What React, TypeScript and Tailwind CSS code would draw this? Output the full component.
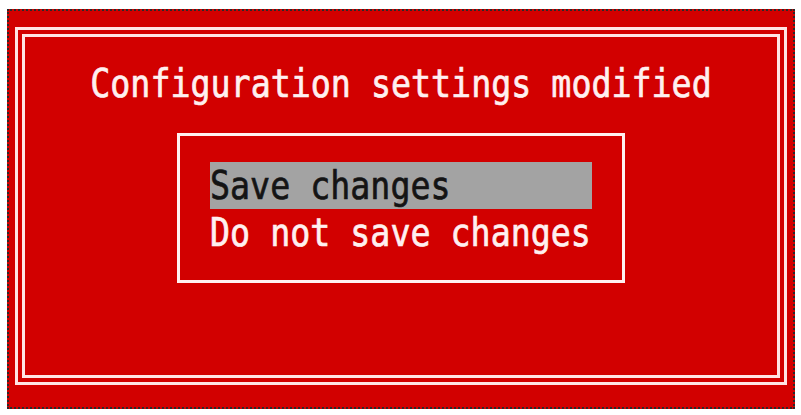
import React from 'react';

const options = ['Save changes', 'Do not save changes'];

const App = () => {
  return (
    <div className="w-[801px] h-[415px] bg-white pt-[9px] pl-[7px] overflow-hidden" style={{ fontFamily: '"DejaVu Sans Mono", "Liberation Mono", monospace' }}>
      <div className="w-[788px] h-[400px] border-2 border-dotted border-[#2a2a2a] bg-[#d20000] pt-[16px] px-[6px] pb-[22px]">
        <div className="h-full border-[3px] border-[#ffe4e4] p-[4px]">
          <div className="h-full border-[3px] border-[#ffe4e4] flex flex-col items-center">
            <div className="mt-[27px] h-[40px] leading-[40px] text-[33.3px] text-[#fff0f0] scale-y-[1.15] whitespace-pre [-webkit-text-stroke:0.6px_#fff0f0]">
              Configuration settings modified
            </div>
            <div className="mt-[29px] border-[3px] border-[#fff0f0] pt-[26px] pb-[24px] pl-[30px] pr-[30px]">
              {options.map((o, i) => (
                <div
                  key={o}
                  className={`w-[382px] h-[47px] leading-[47px] text-[33.3px] whitespace-pre ${i === 0 ? 'bg-[#a3a3a3] text-[#141414] [-webkit-text-stroke:0.6px_#141414]' : 'text-[#fff0f0] [-webkit-text-stroke:0.6px_#fff0f0]'}`}
                >
                  <span className="inline-block scale-y-[1.15]">{o}</span>
                </div>
              ))}
            </div>
          </div>
        </div>
      </div>
    </div>
  );
};

export default App;
